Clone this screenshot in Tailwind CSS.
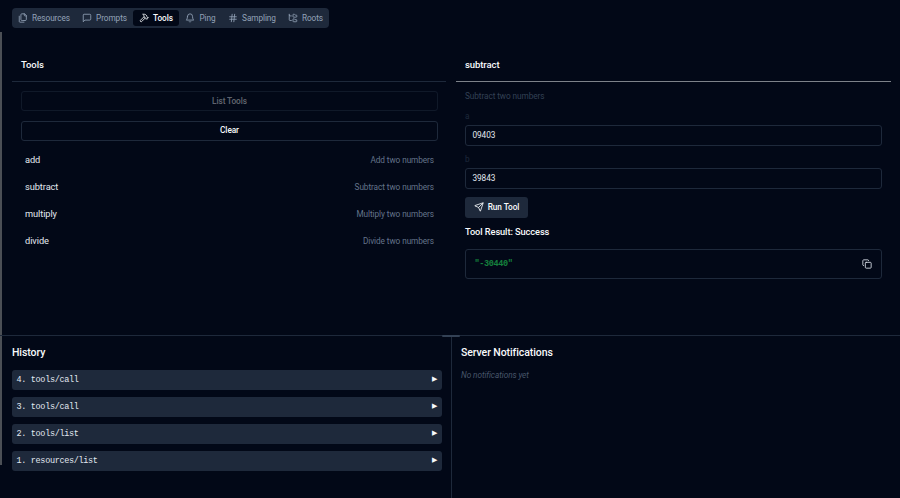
<!doctype html>
<html>
<head>
<meta charset="utf-8">
<script src="https://cdn.jsdelivr.net/npm/@tailwindcss/browser@4"></script>
</head>
<body class="m-0 overflow-hidden bg-[#020817]">
<div class="relative flex h-[498px] w-[900px] flex-col overflow-hidden bg-[#020817] font-['Roboto',sans-serif] text-[8.25px] tracking-[-0.08px] text-[#f8fafc]">
  <div class="absolute left-0 top-[32px] h-[433px] w-[1.5px] bg-[#4b4f55]"></div>

  <div class="flex h-[335px] flex-col">
    <div class="flex px-[12px] pt-[8px]">
      <div class="flex h-[20px] w-[317px] items-center rounded-[4px] bg-[#1e293b] text-[8.25px] text-[#94a3b8]">
        <div class="flex h-[16px] w-[64px] items-center justify-center gap-[4px]">
          <svg class="h-[10px] w-[10px]" viewBox="0 0 24 24" fill="none" stroke="currentColor" stroke-width="2" stroke-linecap="round" stroke-linejoin="round"><path d="M20 7h-3a2 2 0 0 1-2-2V2"/><path d="M9 18a2 2 0 0 1-2-2V4a2 2 0 0 1 2-2h7l4 4v10a2 2 0 0 1-2 2Z"/><path d="M3 7.6v12.8A1.6 1.6 0 0 0 4.6 22h9.8"/></svg>
          <span>Resources</span>
        </div>
        <div class="flex h-[16px] w-[57px] items-center justify-center gap-[4px]">
          <svg class="h-[10px] w-[10px]" viewBox="0 0 24 24" fill="none" stroke="currentColor" stroke-width="2" stroke-linecap="round" stroke-linejoin="round"><path d="M21 15a2 2 0 0 1-2 2H7l-4 4V5a2 2 0 0 1 2-2h14a2 2 0 0 1 2 2z"/></svg>
          <span>Prompts</span>
        </div>
        <div class="flex h-[16px] w-[46px] items-center justify-center gap-[4px] rounded-[3px] bg-[#020817] font-medium text-[#f8fafc]">
          <svg class="h-[10px] w-[10px]" viewBox="0 0 24 24" fill="none" stroke="currentColor" stroke-width="2" stroke-linecap="round" stroke-linejoin="round"><path d="m15 12-8.373 8.373a1 1 0 1 1-3-3L12 9"/><path d="m18 15 4-4"/><path d="m21.5 11.5-1.914-1.914A2 2 0 0 1 19 8.172V7l-2.26-2.26a6 6 0 0 0-4.202-1.756L9 2.96l.92.82A6.18 6.18 0 0 1 12 8.4V10l2 2h1.172a2 2 0 0 1 1.414.586L18.5 14.5"/></svg>
          <span>Tools</span>
        </div>
        <div class="flex h-[16px] w-[43px] items-center justify-center gap-[4px]">
          <svg class="h-[10px] w-[10px]" viewBox="0 0 24 24" fill="none" stroke="currentColor" stroke-width="2" stroke-linecap="round" stroke-linejoin="round"><path d="M6 8a6 6 0 0 1 12 0c0 7 3 9 3 9H3s3-2 3-9"/><path d="M10.3 21a1.94 1.94 0 0 0 3.4 0"/></svg>
          <span>Ping</span>
        </div>
        <div class="flex h-[16px] w-[60px] items-center justify-center gap-[4px]">
          <svg class="h-[10px] w-[10px]" viewBox="0 0 24 24" fill="none" stroke="currentColor" stroke-width="2" stroke-linecap="round" stroke-linejoin="round"><line x1="4" x2="20" y1="9" y2="9"/><line x1="4" x2="20" y1="15" y2="15"/><line x1="10" x2="8" y1="3" y2="21"/><line x1="16" x2="14" y1="3" y2="21"/></svg>
          <span>Sampling</span>
        </div>
        <div class="flex h-[16px] w-[47px] items-center justify-center gap-[4px]">
          <svg class="h-[10px] w-[10px]" viewBox="0 0 24 24" fill="none" stroke="currentColor" stroke-width="2" stroke-linecap="round" stroke-linejoin="round"><path d="M20 10a1 1 0 0 0 1-1V6a1 1 0 0 0-1-1h-2.5a1 1 0 0 1-.8-.4l-.9-1.2A1 1 0 0 0 15 3h-2a1 1 0 0 0-1 1v5a1 1 0 0 0 1 1Z"/><path d="M20 21a1 1 0 0 0 1-1v-3a1 1 0 0 0-1-1h-2.9a1 1 0 0 1-.88-.55l-.42-.85a1 1 0 0 0-.92-.6H13a1 1 0 0 0-1 1v5a1 1 0 0 0 1 1Z"/><path d="M3 5a2 2 0 0 0 2 2h3"/><path d="M3 3v13a2 2 0 0 0 2 2h3"/></svg>
          <span>Roots</span>
        </div>
      </div>
    </div>

    <div class="mt-[20px] flex">
      <div class="ml-[12px] w-[434px]">
        <div class="flex h-[34px] items-center border-b border-[#1e293b] pl-[9px] pt-[2px] text-[9.5px] font-medium">Tools</div>
        <div class="px-[9px] pt-[8.5px]">
          <div class="flex h-[20px] w-[417px] items-center justify-center rounded-[3px] border border-[#1e293b]/50 pt-[1px] font-medium text-[#f8fafc]/40">List Tools</div>
          <div class="mt-[10px] flex h-[20px] w-[417px] items-center justify-center rounded-[3px] border border-[#1e293b] font-medium">Clear</div>
          <div class="mt-[6px] flex flex-col">
            <div class="flex h-[27px] items-center justify-between pl-[4px] pr-[3px]"><span class="text-[9.25px] text-[#e2e8f0]">add</span><span class="text-[#64748b]">Add two numbers</span></div>
            <div class="flex h-[27px] items-center justify-between pl-[4px] pr-[3px]"><span class="text-[9.25px] text-[#e2e8f0]">subtract</span><span class="text-[#64748b]">Subtract two numbers</span></div>
            <div class="flex h-[27px] items-center justify-between pl-[4px] pr-[3px]"><span class="text-[9.25px] text-[#e2e8f0]">multiply</span><span class="text-[#64748b]">Multiply two numbers</span></div>
            <div class="flex h-[27px] items-center justify-between pl-[4px] pr-[3px]"><span class="text-[9.25px] text-[#e2e8f0]">divide</span><span class="text-[#64748b]">Divide two numbers</span></div>
          </div>
        </div>
      </div>

      <div class="ml-[10px] w-[435px]">
        <div class="flex h-[34px] items-center border-b-[1.5px] border-[#7d828a] pl-[9px] pt-[2px] text-[9.5px] font-medium">subtract</div>
        <div class="pl-[9px] pr-[9px]">
          <div class="mt-[8px] leading-[12px] text-[#334155]">Subtract two numbers</div>
          <div class="mt-[7.5px] leading-[12px] text-[#1e293b]">a</div>
          <div class="mt-[3.5px] flex h-[20.5px] w-[417px] items-center rounded-[3px] border border-[#1e293b] px-[6.5px] text-[#e2e8f0]">09403</div>
          <div class="mt-[7px] leading-[12px] text-[#1e293b]">b</div>
          <div class="mt-[3.5px] flex h-[20.5px] w-[417px] items-center rounded-[3px] border border-[#1e293b] px-[6.5px] text-[#e2e8f0]">39843</div>
          <div class="mt-[8.5px] flex h-[20.5px] w-[63px] items-center justify-center gap-[4px] rounded-[3px] bg-[#1e293b] font-medium">
            <svg class="h-[10px] w-[10px]" viewBox="0 0 24 24" fill="none" stroke="currentColor" stroke-width="2" stroke-linecap="round" stroke-linejoin="round"><path d="M14.536 21.686a.5.5 0 0 0 .937-.024l6.5-19a.496.496 0 0 0-.635-.635l-19 6.5a.5.5 0 0 0-.024.937l7.93 3.18a2 2 0 0 1 1.112 1.11z"/><path d="m21.854 2.147-10.94 10.939"/></svg>
            <span>Run Tool</span>
          </div>
          <div class="mt-[8.5px] text-[9.25px] font-medium leading-[12px]">Tool Result: Success</div>
          <div class="mt-[10.5px] flex h-[30px] w-[417px] items-center justify-between rounded-[3px] border border-[#1e293b] pl-[8.5px] pr-[9px]">
            <span class="pt-[1px] font-['Liberation_Mono',monospace] text-[8.5px] font-bold tracking-[-0.35px] text-[#15803d]">"-30440"</span>
            <svg class="h-[10px] w-[10px] text-[#e2e8f0]" viewBox="0 0 24 24" fill="none" stroke="currentColor" stroke-width="2" stroke-linecap="round" stroke-linejoin="round"><rect width="14" height="14" x="8" y="8" rx="2" ry="2"/><path d="M4 16c-1.1 0-2-.9-2-2V4c0-1.1.9-2 2-2h10c1.1 0 2 .9 2 2"/></svg>
          </div>
        </div>
      </div>
    </div>
  </div>

  <div class="relative flex flex-1 border-t border-[#1e293b]">
    <div class="absolute left-[442px] top-[-1px] h-[2px] w-[18px] rounded-full bg-[#334155]"></div>
    <div class="w-[452px] border-r border-[#1e293b] pl-[12px] pr-[9px]">
      <div class="mt-[10px] text-[10.5px] font-medium leading-[14px]">History</div>
      <div class="mt-[9.5px] flex flex-col gap-[7px] font-['Liberation_Mono',monospace] text-[8.5px] tracking-[-0.33px] text-[#e2e8f0]">
        <div class="flex h-[20px] items-center justify-between rounded-[3px] bg-[#1e293b] pl-[4.5px] pr-[5px]"><span class="pt-[1px]">4. tools/call</span><span class="font-['DejaVu_Sans',sans-serif] text-[7px] text-[#f8fafc]">▶</span></div>
        <div class="flex h-[20px] items-center justify-between rounded-[3px] bg-[#1e293b] pl-[4.5px] pr-[5px]"><span class="pt-[1px]">3. tools/call</span><span class="font-['DejaVu_Sans',sans-serif] text-[7px] text-[#f8fafc]">▶</span></div>
        <div class="flex h-[20px] items-center justify-between rounded-[3px] bg-[#1e293b] pl-[4.5px] pr-[5px]"><span class="pt-[1px]">2. tools/list</span><span class="font-['DejaVu_Sans',sans-serif] text-[7px] text-[#f8fafc]">▶</span></div>
        <div class="flex h-[20px] items-center justify-between rounded-[3px] bg-[#1e293b] pl-[4.5px] pr-[5px]"><span class="pt-[1px]">1. resources/list</span><span class="font-['DejaVu_Sans',sans-serif] text-[7px] text-[#f8fafc]">▶</span></div>
      </div>
    </div>
    <div class="pl-[9px]">
      <div class="mt-[10px] text-[10.5px] font-medium leading-[14px]">Server Notifications</div>
      <div class="mt-[9px] text-[8.25px] italic leading-[12px] text-[#475569]">No notifications yet</div>
    </div>
  </div>
</div>
</body>
</html>
